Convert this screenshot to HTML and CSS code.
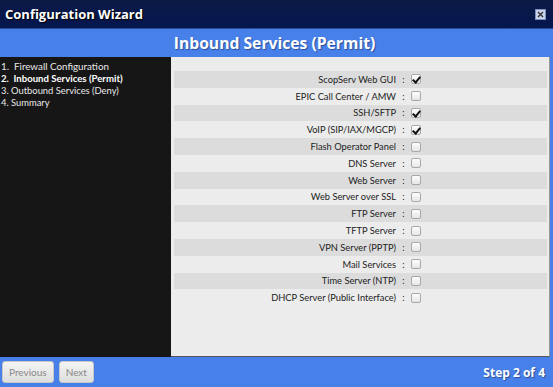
FILE: index.html
```html
<!DOCTYPE html>
<html lang="en">
<head>
    <meta charset="UTF-8">
    <title>Configuration Wizard</title>
    <link rel="stylesheet" href="styles.css">
</head>
<body>

<div class="wizard">
    <div class="titlebar">
        <span class="title">Configuration Wizard</span>
        <span class="close">
            <svg width="7" height="7" viewBox="0 0 7 7"><path d="M1 1L6 6M6 1L1 6" stroke="#333" stroke-width="1.4"/></svg>
        </span>
    </div>
    <div class="header">Inbound Services (Permit)</div>

    <div class="body">
        <ul class="steps">
            <li class="big">1.&nbsp; Firewall Configuration</li>
            <li class="big current">2.&nbsp; Inbound Services (Permit)</li>
            <li>3. Outbound Services (Deny)</li>
            <li>4. Summary</li>
        </ul>

        <div class="panel">
            <div class="row"><label>ScopServ Web GUI</label><span class="colon">:</span><span class="cb checked"></span></div>
            <div class="row"><label>EPIC Call Center / AMW</label><span class="colon">:</span><span class="cb"></span></div>
            <div class="row"><label>SSH/SFTP</label><span class="colon">:</span><span class="cb checked"></span></div>
            <div class="row"><label>VoIP (SIP/IAX/MGCP)</label><span class="colon">:</span><span class="cb checked"></span></div>
            <div class="row"><label>Flash Operator Panel</label><span class="colon">:</span><span class="cb"></span></div>
            <div class="row"><label>DNS Server</label><span class="colon">:</span><span class="cb"></span></div>
            <div class="row"><label>Web Server</label><span class="colon">:</span><span class="cb"></span></div>
            <div class="row"><label>Web Server over SSL</label><span class="colon">:</span><span class="cb"></span></div>
            <div class="row"><label>FTP Server</label><span class="colon">:</span><span class="cb"></span></div>
            <div class="row"><label>TFTP Server</label><span class="colon">:</span><span class="cb"></span></div>
            <div class="row"><label>VPN Server (PPTP)</label><span class="colon">:</span><span class="cb"></span></div>
            <div class="row"><label>Mail Services</label><span class="colon">:</span><span class="cb"></span></div>
            <div class="row"><label>Time Server (NTP)</label><span class="colon">:</span><span class="cb"></span></div>
            <div class="row"><label>DHCP Server (Public Interface)</label><span class="colon">:</span><span class="cb"></span></div>
        </div>
    </div>

    <div class="footer">
        <button class="btn">Previous</button>
        <button class="btn">Next</button>
        <span class="step">Step 2 of 4</span>
    </div>
</div>

</body>
</html>
```

FILE: styles.css
```css
body {
    margin: 0;
    font-family: "Open Sans", Arial, sans-serif;
    background: #4880ea;
}
.wizard {
    width: 553px;
    height: 387px;
    display: flex;
    flex-direction: column;
    background: #4880ea;
}
.titlebar {
    height: 29px;
    display: flex;
    align-items: center;
    justify-content: space-between;
    padding: 0 7px 0 5px;
    background: linear-gradient(#0b1a44, #051650);
    border-bottom: 1px solid #2a4a90;
    box-sizing: border-box;
}
.title {
    color: #fff;
    font-weight: bold;
    font-size: 13px;
    text-shadow: 1px 1px 1px #000;
}
.close {
    width: 11px;
    height: 11px;
    box-sizing: border-box;
    border: 1px solid #7c8fb8;
    background: #c8d3ea;
    display: flex;
    align-items: center;
    justify-content: center;
}
.header {
    height: 28px;
    line-height: 28px;
    padding-right: 4px;
    text-align: center;
    color: #fff;
    font-weight: bold;
    font-size: 15.7px;
    text-shadow: 1px 1px 1px #2a4f9a;
    background: #4880ea;
}
.body {
    height: 300px;
    display: flex;
    margin-right: 3px;
    background: #161616;
}
.steps {
    width: 168px;
    margin: 0;
    padding: 3px 0 0 1px;
    list-style: none;
    color: #e8e8e8;
    font-family: Lato, "Open Sans", sans-serif;
    font-size: 9.4px;
    line-height: 11.5px;
}
.steps .big {
    font-size: 9.8px;
    line-height: 12.5px;
}
.steps .current {
    color: #fff;
    font-weight: bold;
    font-size: 9.6px;
}
.panel {
    flex: 1;
    margin-left: 2px;
    padding: 14px 2px 0 3px;
    background: #ececec;
    border-bottom: 1px solid #555;
    border-right: 1px solid #999;
    box-sizing: border-box;
}
.row {
    height: 16.8px;
    display: flex;
    align-items: center;
    font-family: Lato, "Open Sans", sans-serif;
    font-size: 9.3px;
    color: #222;
}
.row:nth-child(odd) {
    background: #dcdcdc;
}
.row label {
    width: 222px;
    text-align: right;
}
.colon {
    width: 15px;
    text-align: center;
}
.cb {
    width: 10px;
    height: 10px;
    box-sizing: border-box;
    border: 1px solid #a8a8a8;
    border-radius: 2px;
    background: linear-gradient(#fdfdfd, #e6e6e6);
    position: relative;
}
.cb.checked::after {
    content: "";
    position: absolute;
    left: 2px;
    top: 0px;
    width: 3px;
    height: 6px;
    border: solid #111;
    border-width: 0 2px 2px 0;
    transform: rotate(40deg);
}
.footer {
    flex: 1;
    display: flex;
    align-items: center;
    gap: 5px;
    padding: 0 8px 0 2px;
}
.btn {
    height: 22px;
    padding: 0 6px;
    font-family: Lato, "Open Sans", sans-serif;
    font-size: 10px;
    color: #888;
    background: linear-gradient(#f4f4f4, #dedede);
    border: 1px solid #c8c8c8;
    border-radius: 3px;
}
.step {
    margin-left: auto;
    color: #fff;
    font-weight: bold;
    font-size: 12px;
    text-shadow: 1px 1px 1px #2a4f9a;
}
```
